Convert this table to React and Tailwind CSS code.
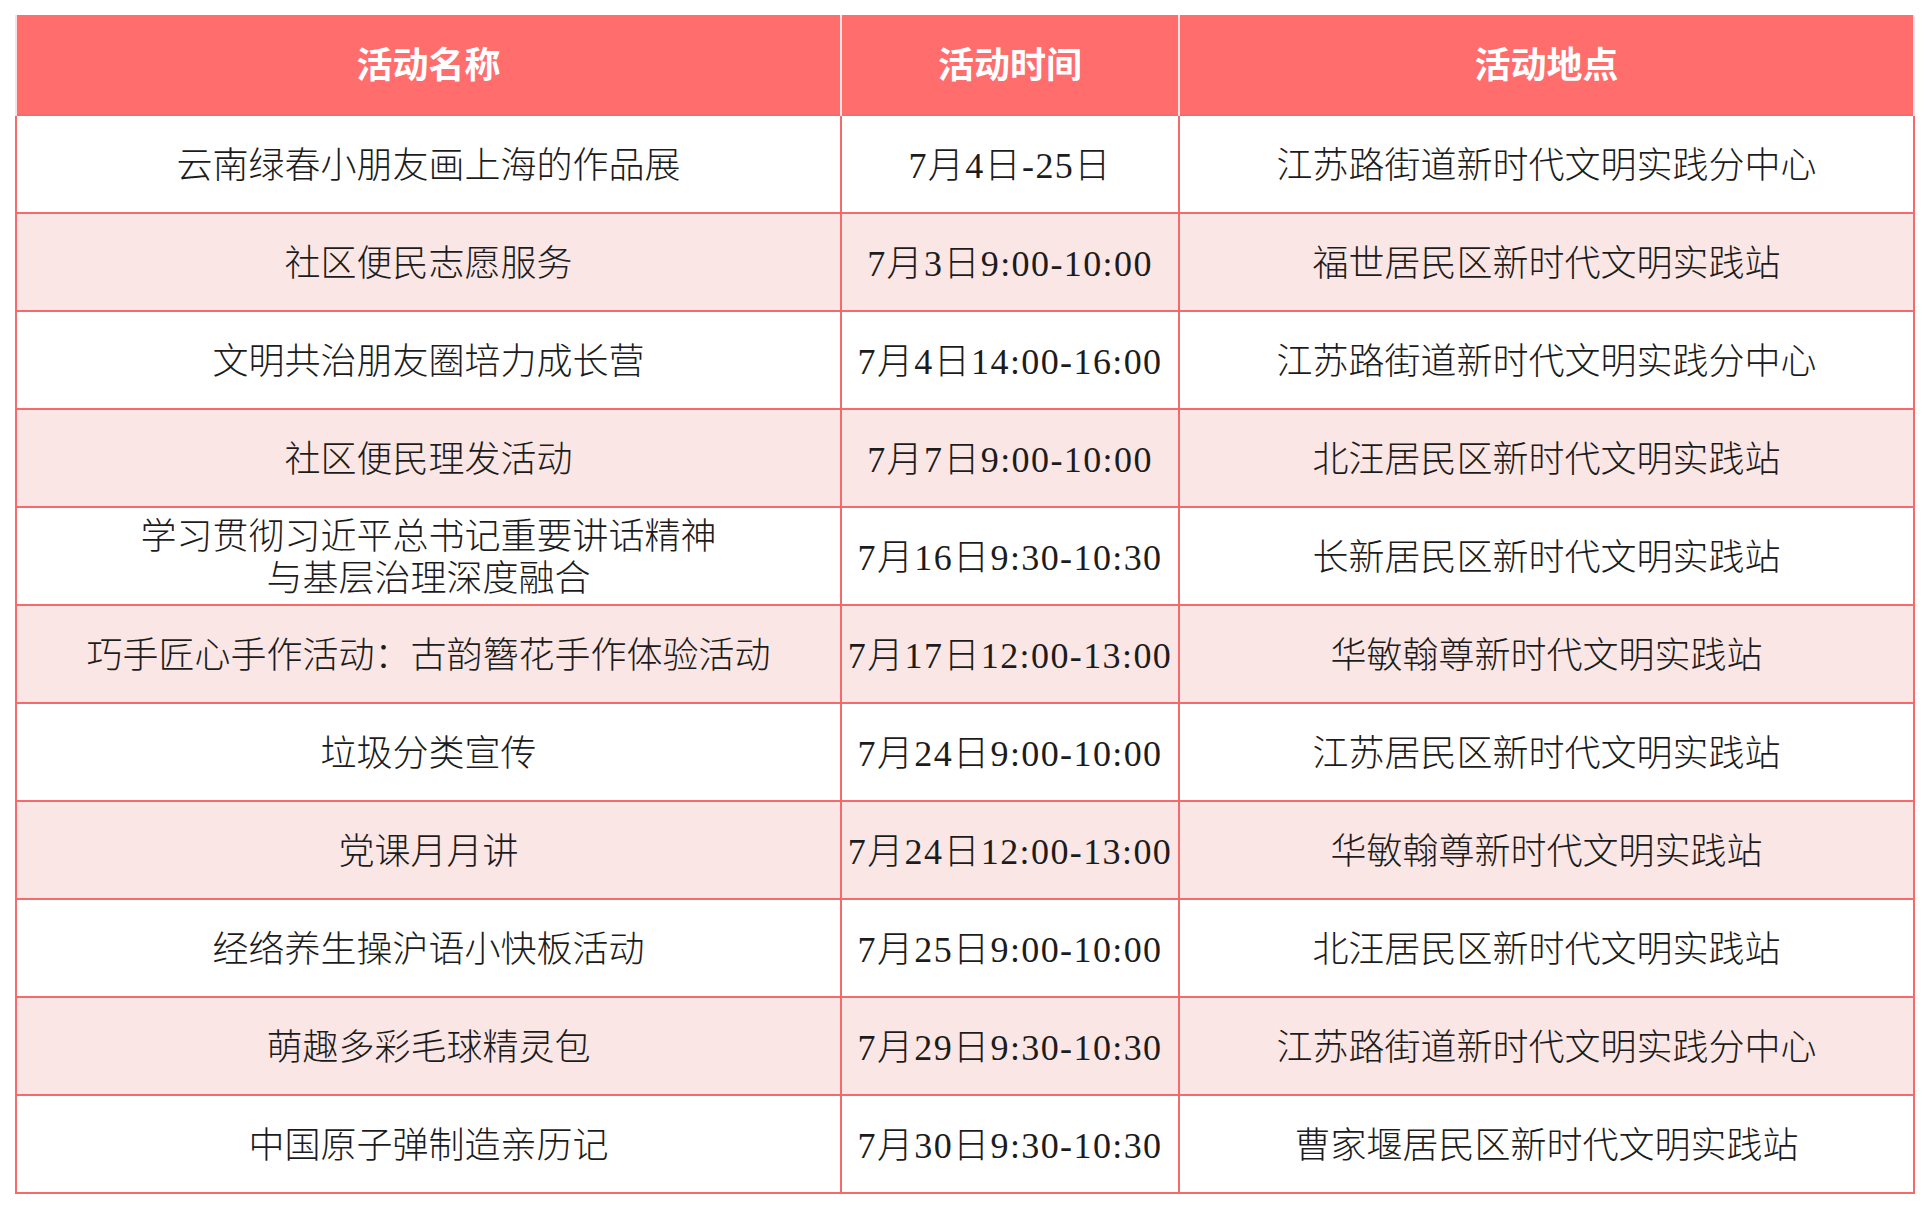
const rows = [
  { name: "云南绿春小朋友画上海的作品展", time: "7月4日-25日", place: "江苏路街道新时代文明实践分中心" },
  { name: "社区便民志愿服务", time: "7月3日9:00-10:00", place: "福世居民区新时代文明实践站" },
  { name: "文明共治朋友圈培力成长营", time: "7月4日14:00-16:00", place: "江苏路街道新时代文明实践分中心" },
  { name: "社区便民理发活动", time: "7月7日9:00-10:00", place: "北汪居民区新时代文明实践站" },
  { name: ["学习贯彻习近平总书记重要讲话精神", "与基层治理深度融合"], time: "7月16日9:30-10:30", place: "长新居民区新时代文明实践站" },
  { name: "巧手匠心手作活动：古韵簪花手作体验活动", time: "7月17日12:00-13:00", place: "华敏翰尊新时代文明实践站" },
  { name: "垃圾分类宣传", time: "7月24日9:00-10:00", place: "江苏居民区新时代文明实践站" },
  { name: "党课月月讲", time: "7月24日12:00-13:00", place: "华敏翰尊新时代文明实践站" },
  { name: "经络养生操沪语小快板活动", time: "7月25日9:00-10:00", place: "北汪居民区新时代文明实践站" },
  { name: "萌趣多彩毛球精灵包", time: "7月29日9:30-10:30", place: "江苏路街道新时代文明实践分中心" },
  { name: "中国原子弹制造亲历记", time: "7月30日9:30-10:30", place: "曹家堰居民区新时代文明实践站" },
];

const App = () => {
  return (
    <div className="min-h-[1208px] bg-white pt-[15px] px-[15px] font-['Liberation_Serif','Noto_Sans_CJK_SC',serif]">
      <table className="w-[1898px] table-fixed border-collapse text-[36px] text-[#1c1c1c]">
        <colgroup>
          <col className="w-[825px]" />
          <col className="w-[338px]" />
          <col className="w-[735px]" />
        </colgroup>
        <thead>
          <tr className="h-[100px] bg-[#ff6d6d] text-white">
            <th className="border-x-2 border-[#f6e4e4] pt-[3px] font-bold">活动名称</th>
            <th className="border-x-2 border-[#f6e4e4] pt-[3px] font-bold">活动时间</th>
            <th className="border-x-2 border-[#f6e4e4] pt-[3px] font-bold">活动地点</th>
          </tr>
        </thead>
        <tbody>
          {rows.map((row, i) => (
            <tr key={i} className={`h-[98px] ${i % 2 === 1 ? "bg-[#fae6e5]" : "bg-white"}`}>
              <td className="border-2 border-[#f56b6b] pt-[3px] text-center font-light leading-[42px]">
                {Array.isArray(row.name) ? (
                  <>
                    {row.name[0]}
                    <br />
                    {row.name[1]}
                  </>
                ) : (
                  row.name
                )}
              </td>
              <td className="border-2 border-[#f56b6b] pt-[3px] text-center whitespace-nowrap font-light tracking-[1.4px]">
                {row.time}
              </td>
              <td className="border-2 border-[#f56b6b] pt-[3px] text-center font-light">{row.place}</td>
            </tr>
          ))}
        </tbody>
      </table>
    </div>
  );
};

export default App;
